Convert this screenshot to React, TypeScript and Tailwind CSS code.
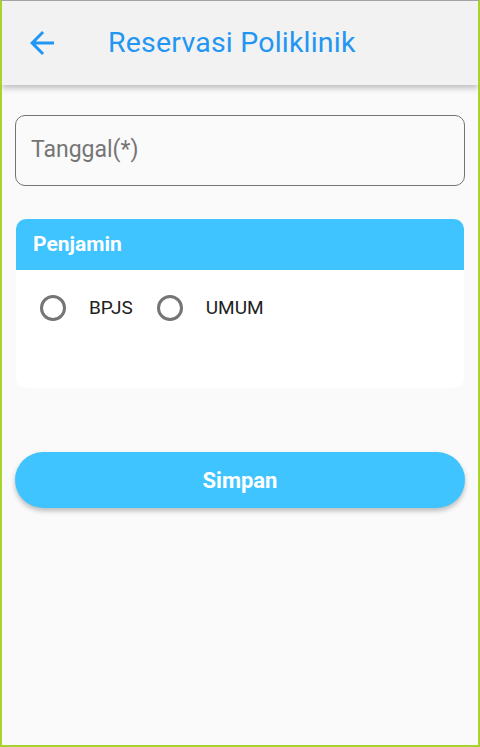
import { useState } from "react";

const OPTIONS = ["BPJS", "UMUM"];

export default function App() {
  const [penjamin, setPenjamin] = useState("");

  return (
    <div
      className="h-[747px] w-full bg-[#fafafa] border-t border-t-[#a3a3a3] border-x-2 border-b-2 border-x-[#a6d32e] border-b-[#a6d32e] overflow-hidden"
      style={{ fontFamily: "Roboto, 'Noto Sans', sans-serif" }}
    >
      {/* App bar */}
      <div className="relative z-10 h-[84px] bg-[#f2f2f2] flex items-center shadow-[0_3px_6px_rgba(0,0,0,0.25)]">
        <button className="ml-[22px] w-9 h-9 flex items-center justify-center text-[#2196f3]">
          <svg width="36" height="36" viewBox="0 0 24 24" fill="currentColor">
            <path d="M20 11H7.83l5.59-5.59L12 4l-8 8 8 8 1.41-1.41L7.83 13H20v-2z" />
          </svg>
        </button>
        <h1 className="ml-[48px] text-[28.5px] text-[#2196f3] leading-none tracking-[0.2px]">Reservasi Poliklinik</h1>
      </div>

      <div className="px-[13px] pt-[30px]">
        {/* Tanggal */}
        <div className="h-[71px] rounded-[10px] border-[1.5px] border-[#757575] flex items-center px-[15px]">
          <span className="text-[23px] text-[#757575]">Tanggal(*)</span>
        </div>

        {/* Penjamin card */}
        <div className="mx-px mt-[33px] h-[169px] rounded-[10px] bg-white overflow-hidden">
          <div className="h-[51px] bg-[#40c4ff] flex items-center px-[17px]">
            <span className="text-[21px] font-bold text-white">Penjamin</span>
          </div>
          <div className="flex items-center pl-[24px] pt-[24px]">
            {OPTIONS.map((o) => (
              <label key={o} className="flex items-center mr-[24px] cursor-pointer" onClick={() => setPenjamin(o)}>
                <span className="w-[26px] h-[26px] rounded-full border-[3px] border-[#757575] flex items-center justify-center">
                  {penjamin === o && <span className="w-3 h-3 rounded-full bg-[#40c4ff]" />}
                </span>
                <span className="ml-[23px] text-[19px] text-[#212121]">{o}</span>
              </label>
            ))}
          </div>
        </div>

        {/* Simpan */}
        <button className="mt-[64px] w-full h-[56px] rounded-full bg-[#40c4ff] text-white text-[22px] font-bold shadow-[0_3px_5px_rgba(0,0,0,0.25)]">
          Simpan
        </button>
      </div>
    </div>
  );
}
